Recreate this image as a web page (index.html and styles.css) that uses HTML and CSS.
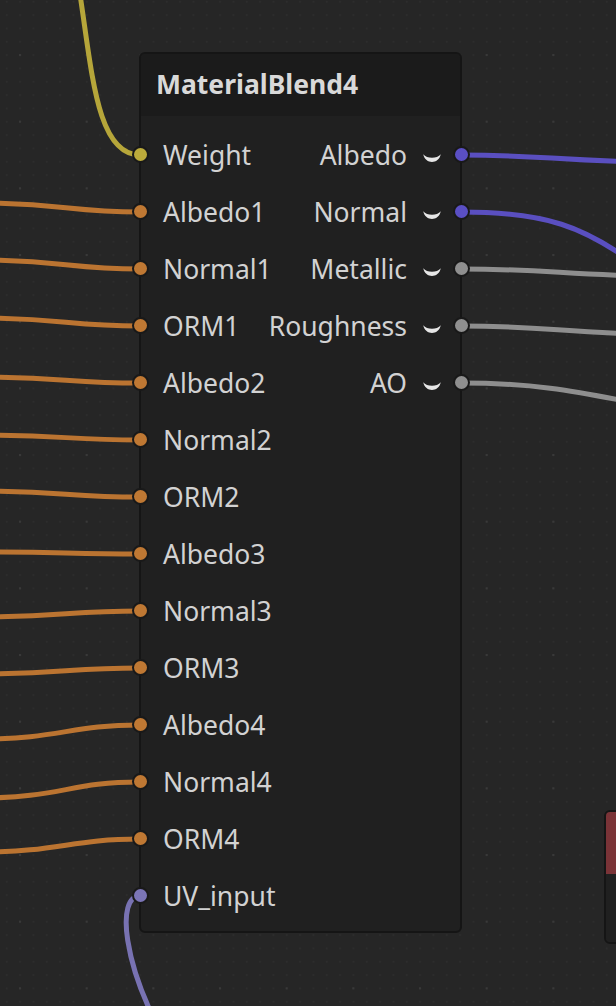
FILE: index.html
```html
<!DOCTYPE html>
<html>
<head>
<meta charset="utf-8">
<link rel="stylesheet" href="styles.css">
</head>
<body>
<div class="canvas">
  <svg class="layer" width="616" height="1006" viewBox="0 0 616 1006">
    <defs>
      <pattern id="minor" x="5.9" y="0.9" width="13.333" height="13.333" patternUnits="userSpaceOnUse">
        <rect x="0" y="0" width="1.6" height="1.6" fill="#2e2e2e"/>
      </pattern>
      <pattern id="major" x="19" y="54" width="66.667" height="66.667" patternUnits="userSpaceOnUse">
        <rect x="0" y="0" width="2" height="2" fill="#393939"/>
      </pattern>
    </defs>
    <rect width="616" height="1006" fill="url(#minor)"/>
    <rect width="616" height="1006" fill="url(#major)"/>
    <g fill="none" stroke-width="5" stroke-linecap="round">
      <path stroke="#b6a63a" d="M79 -12 C92 70 96 155 140 155"/>
      <g stroke="#bb7431">
        <path d="M-20 203 C60 203 70 212 140 212"/>
        <path d="M-20 260 C60 260 70 269 140 269"/>
        <path d="M-20 318 C60 318 70 326 140 326"/>
        <path d="M-20 377 C60 377 70 383 140 383"/>
        <path d="M-20 435 C60 435 70 440 140 440"/>
        <path d="M-20 491 C60 491 70 497 140 497"/>
        <path d="M-20 552 C60 552 70 554 140 554"/>
        <path d="M-20 617 C60 617 70 611 140 611"/>
        <path d="M-20 674 C60 674 70 668 140 668"/>
        <path d="M-20 739 C60 739 70 725 140 725"/>
        <path d="M-20 798 C60 798 70 782 140 782"/>
        <path d="M-20 852 C60 852 70 839 140 839"/>
      </g>
      <path stroke="#7872b2" d="M140 896 C116 896 122 965 168 1045"/>
      <g stroke="#5a4fc0">
        <path d="M461 155 C540 155 550 160 640 162"/>
        <path d="M461 212 C545 212 585 226 640 268"/>
      </g>
      <g stroke="#8e8e8e">
        <path d="M461 269 C540 269 560 274 640 276"/>
        <path d="M461 326 C540 326 560 332 640 334"/>
        <path d="M461 383 C530 383 570 390 640 404"/>
      </g>
    </g>
  </svg>

  <div class="node node-main">
    <div class="node-header">MaterialBlend4</div>
    <div class="node-body">
      <div class="row">
        <span class="in"><i class="sock sock-in c-yellow"></i>Weight</span>
        <span class="out">Albedo<svg class="chev" viewBox="0 0 18 9"><path d="M0.2 0.2 C4 5 14 5 17.8 0.2 C15.5 10.5 2.5 10.5 0.2 0.2 Z"/></svg><i class="sock sock-out c-blue"></i></span>
      </div>
      <div class="row">
        <span class="in"><i class="sock sock-in c-orange"></i>Albedo1</span>
        <span class="out">Normal<svg class="chev" viewBox="0 0 18 9"><path d="M0.2 0.2 C4 5 14 5 17.8 0.2 C15.5 10.5 2.5 10.5 0.2 0.2 Z"/></svg><i class="sock sock-out c-blue"></i></span>
      </div>
      <div class="row">
        <span class="in"><i class="sock sock-in c-orange"></i>Normal1</span>
        <span class="out">Metallic<svg class="chev" viewBox="0 0 18 9"><path d="M0.2 0.2 C4 5 14 5 17.8 0.2 C15.5 10.5 2.5 10.5 0.2 0.2 Z"/></svg><i class="sock sock-out c-gray"></i></span>
      </div>
      <div class="row">
        <span class="in"><i class="sock sock-in c-orange"></i>ORM1</span>
        <span class="out">Roughness<svg class="chev" viewBox="0 0 18 9"><path d="M0.2 0.2 C4 5 14 5 17.8 0.2 C15.5 10.5 2.5 10.5 0.2 0.2 Z"/></svg><i class="sock sock-out c-gray"></i></span>
      </div>
      <div class="row">
        <span class="in"><i class="sock sock-in c-orange"></i>Albedo2</span>
        <span class="out">AO<svg class="chev" viewBox="0 0 18 9"><path d="M0.2 0.2 C4 5 14 5 17.8 0.2 C15.5 10.5 2.5 10.5 0.2 0.2 Z"/></svg><i class="sock sock-out c-gray"></i></span>
      </div>
      <div class="row"><span class="in"><i class="sock sock-in c-orange"></i>Normal2</span></div>
      <div class="row"><span class="in"><i class="sock sock-in c-orange"></i>ORM2</span></div>
      <div class="row"><span class="in"><i class="sock sock-in c-orange"></i>Albedo3</span></div>
      <div class="row"><span class="in"><i class="sock sock-in c-orange"></i>Normal3</span></div>
      <div class="row"><span class="in"><i class="sock sock-in c-orange"></i>ORM3</span></div>
      <div class="row"><span class="in"><i class="sock sock-in c-orange"></i>Albedo4</span></div>
      <div class="row"><span class="in"><i class="sock sock-in c-orange"></i>Normal4</span></div>
      <div class="row"><span class="in"><i class="sock sock-in c-orange"></i>ORM4</span></div>
      <div class="row"><span class="in"><i class="sock sock-in c-purple"></i>UV_input</span></div>
    </div>
  </div>

  <div class="node node-red">
    <div class="red-header"></div>
    <div class="red-body"></div>
  </div>
</div>
</body>
</html>
```

FILE: styles.css
```css
* { box-sizing: border-box; }
html, body { margin: 0; padding: 0; }
body {
  background: #262626;
  font-family: "Noto Sans", "Open Sans", sans-serif;
  overflow: hidden;
}
.canvas {
  position: relative;
  width: 616px;
  height: 1006px;
  overflow: hidden;
  background: #262626;
}
.layer {
  position: absolute;
  left: 0;
  top: 0;
}
.node {
  position: absolute;
  border: 2px solid #151515;
  border-radius: 6px;
  background: #202020;
}
.node-main {
  left: 139px;
  top: 52px;
  width: 323px;
  height: 881px;
  display: flex;
  flex-direction: column;
}
.node-header {
  height: 62px;
  background: #1b1b1b;
  border-radius: 4px 4px 0 0;
  color: #d9d9d9;
  font-weight: 700;
  font-size: 26.5px;
  display: flex;
  align-items: center;
  padding-left: 15px;
  padding-bottom: 2px;
}
.node-body {
  padding-top: 10px;
  display: flex;
  flex-direction: column;
}
.row {
  position: relative;
  height: 57px;
  display: flex;
  align-items: center;
  justify-content: space-between;
  color: #d2d2d2;
  font-size: 26.5px;
}
.in {
  display: flex;
  align-items: center;
  padding-left: 22px;
}
.out {
  display: flex;
  align-items: center;
  padding-right: 19px;
}
.chev {
  width: 18px;
  height: 9px;
  margin-left: 16px;
  margin-top: 8px;
  fill: #e6e6e6;
}
.sock {
  position: absolute;
  top: 50%;
  width: 17px;
  height: 17px;
  margin-top: -9px;
  border-radius: 50%;
  border: 2px solid #191919;
}
.sock-in { left: -9.5px; }
.sock-out { right: -9.5px; }
.c-yellow { background: #bcab3b; }
.c-orange { background: #bf7833; }
.c-blue { background: #5a4fc4; }
.c-gray { background: #8f8f8f; }
.c-purple { background: #7b75b6; }
.node-red {
  left: 604px;
  top: 810px;
  width: 40px;
  height: 134px;
  display: flex;
  flex-direction: column;
  overflow: hidden;
}
.red-header {
  height: 62px;
  background: #7a3337;
}
.red-body {
  flex: 1;
  background: #202020;
}
```
